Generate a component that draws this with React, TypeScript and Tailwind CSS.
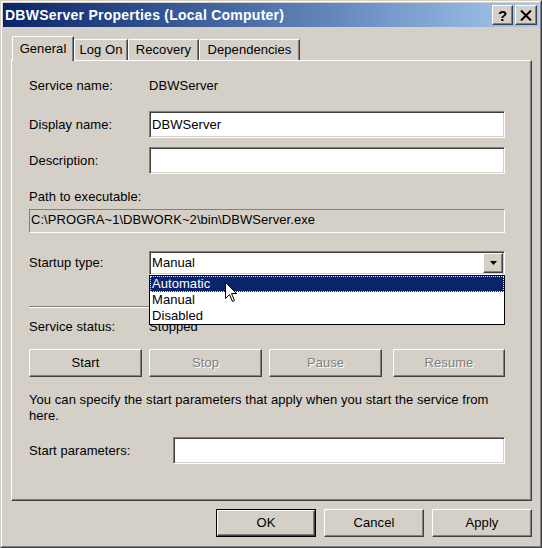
import React from "react";

const raised =
  "bg-[#d4d0c8] border border-t-white border-l-white border-r-[#404040] border-b-[#404040] shadow-[inset_-1px_-1px_0_#808080]";
const sunken =
  "bg-white border border-t-[#808080] border-l-[#808080] border-r-white border-b-white shadow-[inset_1px_1px_0_#404040,inset_-1px_-1px_0_#d4d0c8]";
const disabledText = "text-[#808080] [text-shadow:1px_1px_0_#ffffff]";

function Btn({
  label,
  className,
  disabled,
}: {
  label: string;
  className: string;
  disabled?: boolean;
}) {
  return (
    <div className={`${raised} h-[28px] flex items-center justify-center ${className}`}>
      <span className={disabled ? disabledText : "text-black"}>{label}</span>
    </div>
  );
}

function Tab({ label, className, selected }: { label: string; className: string; selected?: boolean }) {
  if (selected) {
    return (
      <div
        className={`relative z-10 -mb-px h-[25px] bg-[#d4d0c8] border-l border-t border-r border-l-white border-t-white border-r-[#404040] rounded-tl-[2px] shadow-[inset_-1px_0_0_#808080] flex items-center justify-center pb-[1px] ${className}`}
      >
        {label}
      </div>
    );
  }
  return (
    <div
      className={`h-[21px] bg-[#d4d0c8] border-l border-t border-r border-l-white border-t-white border-r-[#404040] rounded-tl-[2px] shadow-[inset_-1px_0_0_#808080] flex items-center justify-center ${className}`}
    >
      {label}
    </div>
  );
}

export default function App() {
  return (
    <div className="w-[542px] h-[548px] font-['Liberation_Sans',Arial,sans-serif] text-[13px] tracking-[0.06px] text-black bg-[#d4d0c8] border border-t-[#d4d0c8] border-l-[#d4d0c8] border-r-[#404040] border-b-[#404040] select-none">
      <div className="w-full h-full border border-t-white border-l-white border-r-[#808080] border-b-[#808080] p-px flex flex-col">
        {/* Title bar */}
        <div className="h-[24px] flex items-center bg-linear-to-r from-[#0a246a] to-[#a6caf0] pl-[2px] pr-[2px] shrink-0">
          <span className="text-white font-bold text-[14px] tracking-[0.25px] leading-none">
            DBWServer Properties (Local Computer)
          </span>
          <div className="ml-auto flex gap-[2px]">
            <div className={`${raised} w-[21px] h-[20px] flex items-center justify-center`}>
              <span className="font-bold text-[15px] leading-none text-black">?</span>
            </div>
            <div className={`${raised} w-[22px] h-[20px] flex items-center justify-center`}>
              <svg width="12" height="11" viewBox="0 0 12 11">
                <path d="M1 0.5 L11 10.5 M11 0.5 L1 10.5" stroke="#000" strokeWidth="2" fill="none" />
              </svg>
            </div>
          </div>
        </div>

        {/* Tabs */}
        <div className="mt-[9px] h-[24px] flex items-end pl-[9px] shrink-0">
          <Tab label="General" className="w-[62px]" selected />
          <Tab label="Log On" className="w-[54px]" />
          <Tab label="Recovery" className="w-[71px]" />
          <Tab label="Dependencies" className="w-[101px]" />
        </div>

        {/* Panel */}
        <div className="ml-[8px] w-[521px] h-[441px] shrink-0 border border-t-white border-l-white border-r-[#404040] border-b-[#404040] shadow-[inset_-1px_-1px_0_#808080] flex flex-col pl-[17px]">
          <div className="mt-[17px] h-[16px] flex items-center">
            <div className="w-[120px]">Service name:</div>
            <div>DBWServer</div>
          </div>

          <div className="mt-[17px] h-[27px] flex items-center">
            <div className="w-[120px]">Display name:</div>
            <div className={`${sunken} w-[356px] h-[27px] flex items-center pl-[2px]`}>DBWServer</div>
          </div>

          <div className="mt-[9px] h-[27px] flex items-center">
            <div className="w-[120px]">Description:</div>
            <div className={`${sunken} w-[356px] h-[27px]`} />
          </div>

          <div className="mt-[15px] h-[16px] flex items-center">Path to executable:</div>
          <div className="mt-[4px] w-[476px] h-[24px] border border-t-[#808080] border-l-[#808080] border-r-white border-b-white flex items-center pl-[1px] pb-[2px]">
            C:\PROGRA~1\DBWORK~2\bin\DBWServer.exe
          </div>

          <div className="mt-[18px] h-[24px] flex items-center relative z-20">
            <div className="w-[120px]">Startup type:</div>
            <div className={`${sunken} relative w-[356px] h-[24px] flex items-center pl-[2px]`}>
              <span>Manual</span>
              <div className={`${raised} absolute right-[1px] top-[1px] w-[20px] h-[20px] flex items-center justify-center`}>
                <svg width="7" height="4" viewBox="0 0 7 4">
                  <path d="M0 0 H7 L3.5 4 Z" fill="#000" />
                </svg>
              </div>
              <div className="absolute left-[-1px] top-[23px] w-[356px] bg-white border border-black flex flex-col">
                <div className="h-[16px] bg-[#0a246a] text-white border border-dotted border-[#f2eeb8] flex items-center pl-[1px]">
                  Automatic
                </div>
                <div className="h-[16px] flex items-center pl-[2px]">Manual</div>
                <div className="h-[16px] flex items-center pl-[2px]">Disabled</div>
              </div>
              <svg
                className="absolute left-[75px] top-[30px]"
                width="13"
                height="21"
                viewBox="0 0 13 21"
              >
                <path
                  d="M0.5 0.5 L0.5 16.5 L4.5 12.5 L7.5 19.5 L9.5 18.5 L6.5 11.5 L11.5 11.5 Z"
                  fill="#fff"
                  stroke="#000"
                  strokeWidth="1"
                />
              </svg>
            </div>
          </div>

          <div className="mt-[31px] w-[476px] h-[2px] border-t border-t-[#808080] border-b border-b-white" />

          <div className="mt-[11px] h-[16px] flex items-center">
            <div className="w-[120px]">Service status:</div>
            <div>Stopped</div>
          </div>

          <div className="mt-[14px] flex">
            <Btn label="Start" className="w-[113px]" />
            <Btn label="Stop" className="w-[113px] ml-[7px]" disabled />
            <Btn label="Pause" className="w-[113px] ml-[7px]" disabled />
            <Btn label="Resume" className="w-[112px] ml-[11px]" disabled />
          </div>

          <div className="mt-[15px] leading-[16px] whitespace-nowrap">
            You can specify the start parameters that apply when you start the service from
            <br />
            here.
          </div>

          <div className="mt-[13px] h-[27px] flex items-center">
            <div className="w-[144px]">Start parameters:</div>
            <div className={`${sunken} w-[332px] h-[27px]`} />
          </div>
        </div>

        {/* Bottom buttons */}
        <div className="mt-[8px] flex justify-end gap-[8px] pr-[7px] shrink-0">
          <div className="w-[100px] h-[28px] border border-black">
            <div className={`${raised} w-full h-full flex items-center justify-center`}>OK</div>
          </div>
          <Btn label="Cancel" className="w-[100px]" />
          <Btn label="Apply" className="w-[100px]" />
        </div>
      </div>
    </div>
  );
}
